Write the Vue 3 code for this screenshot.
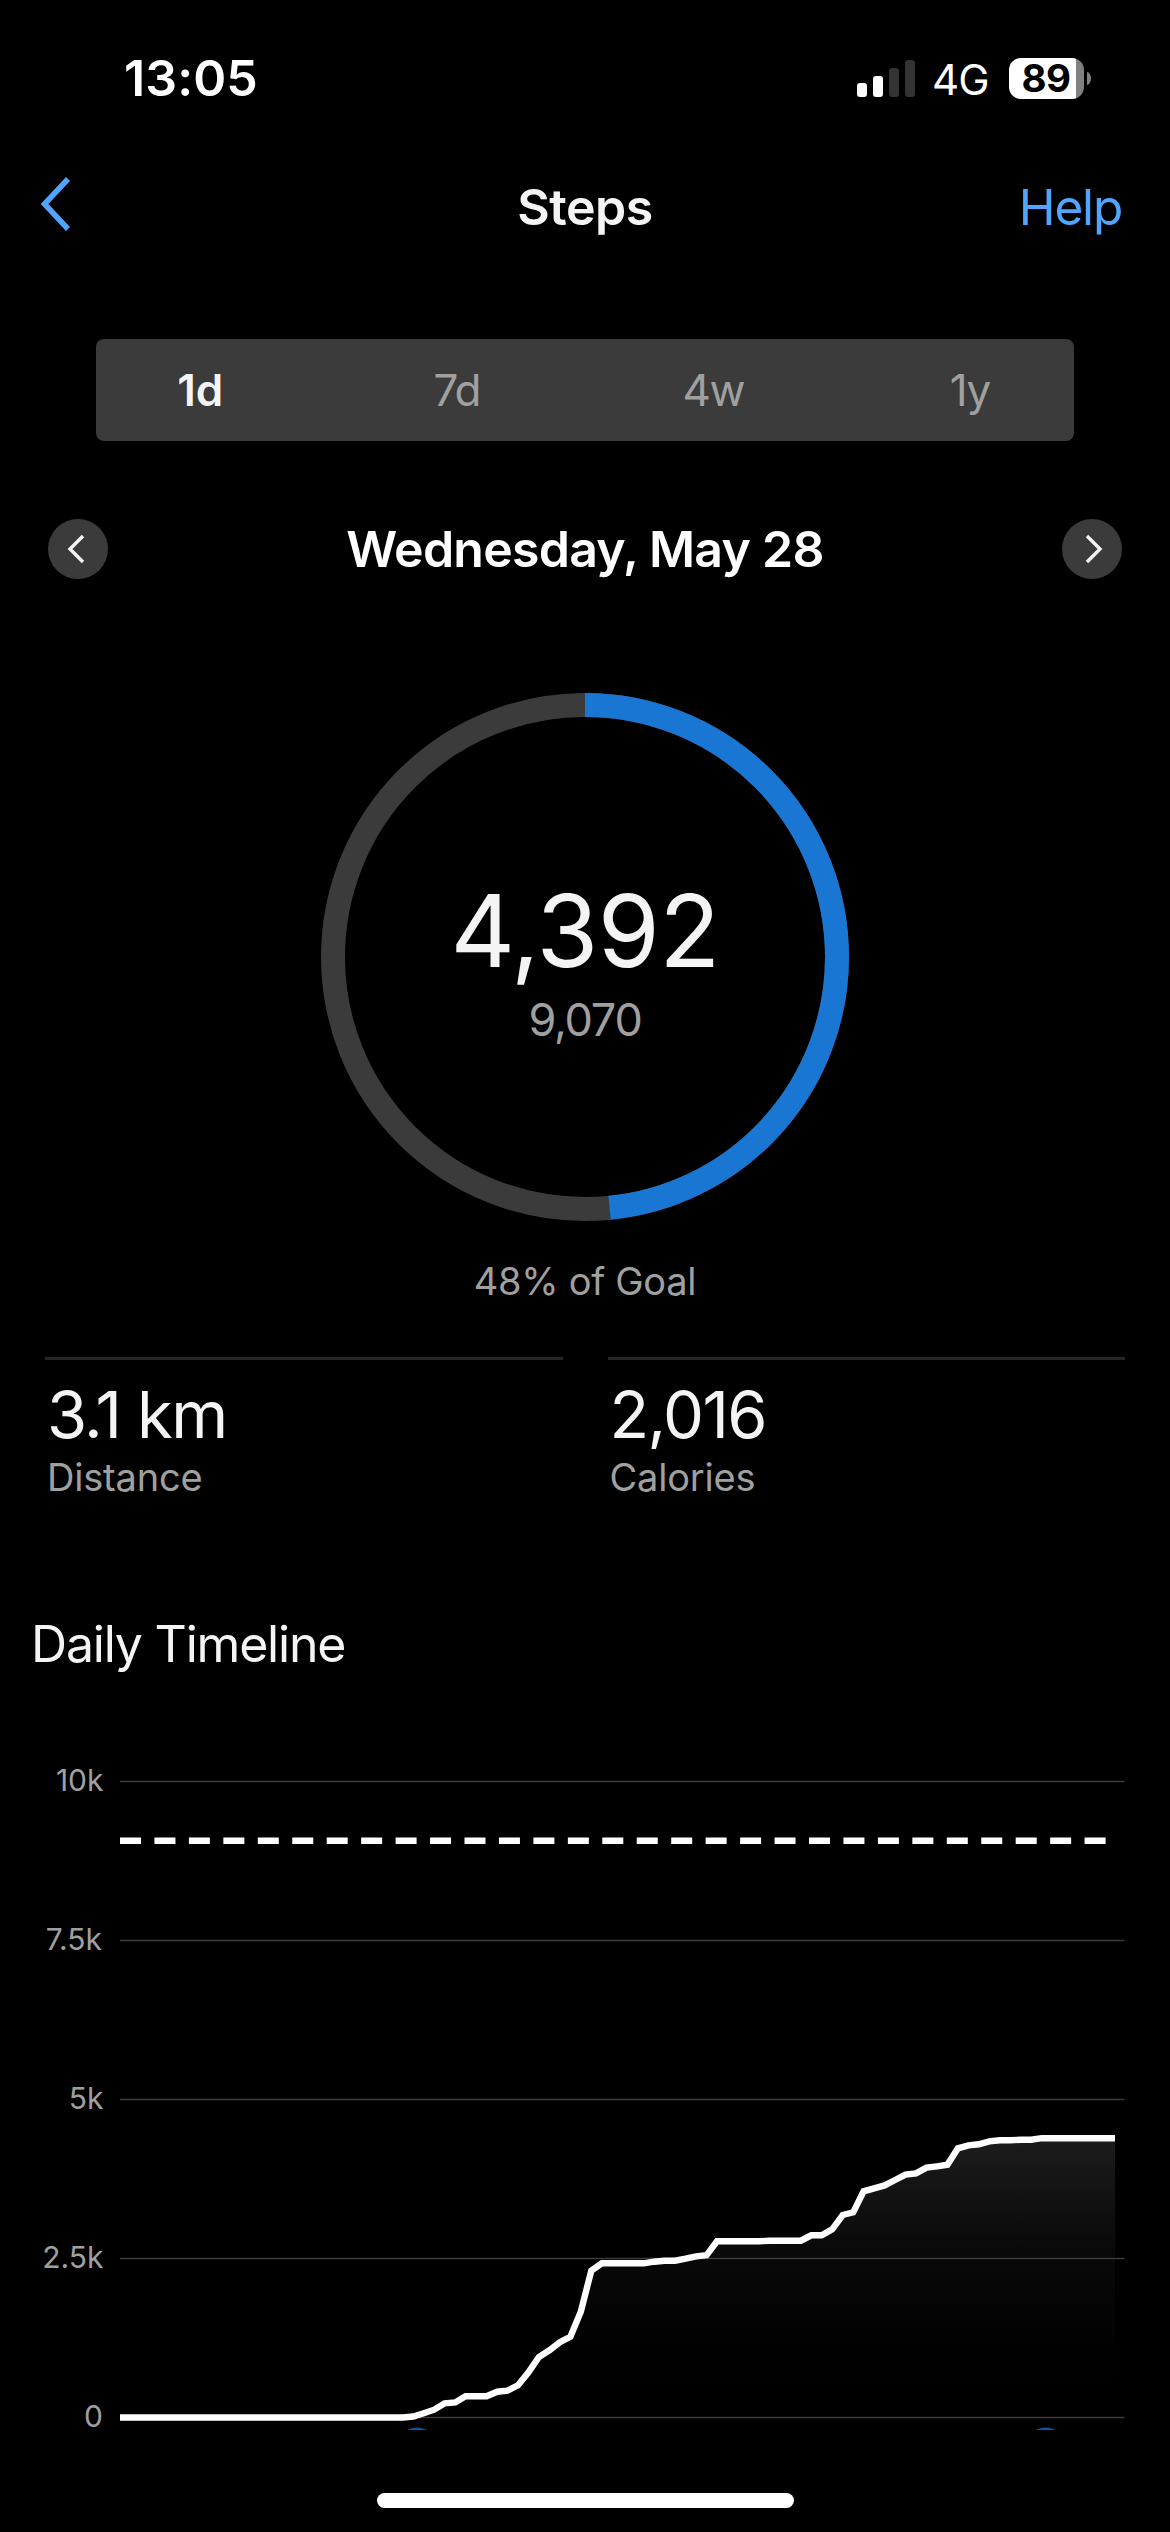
<template>
  <div class="screen">
    <header class="status">
      <span class="time">13:05</span>
      <div class="status-right">
        <div class="signal">
          <i class="on b1"></i><i class="on b2"></i><i class="b3"></i><i class="b4"></i>
        </div>
        <span class="network">4G</span>
        <div class="battery">
          <div class="battery-body"><span>89</span></div>
          <div class="battery-cap"></div>
        </div>
      </div>
    </header>

    <nav class="nav">
      <button class="back">
        <svg width="36" height="60" viewBox="0 0 36 60" fill="none" stroke="currentColor" stroke-width="5.5"><path d="M32 5 8.5 30 32 55"/></svg>
      </button>
      <h1>Steps</h1>
      <button class="help">Help</button>
    </nav>

    <div class="range">
      <div class="range-items">
        <button
          v-for="r in ranges"
          :key="r"
          :class="{ active: r === range }"
          @click="range = r"
        >{{ r }}</button>
      </div>
    </div>

    <div class="date-row">
      <button class="round">
        <svg width="60" height="60" viewBox="0 0 60 60" fill="none" stroke="currentColor" stroke-width="3.4"><path d="M35 17 22 30 35 43"/></svg>
      </button>
      <h2>Wednesday, May 28</h2>
      <button class="round">
        <svg width="60" height="60" viewBox="0 0 60 60" fill="none" stroke="currentColor" stroke-width="3.4"><path d="M25 17 38 30 25 43"/></svg>
      </button>
    </div>

    <div class="ring">
      <svg width="528" height="528" viewBox="0 0 528 528" fill="none" stroke-width="24">
        <circle cx="264" cy="264" r="252" stroke="#3b3b3b"/>
        <circle
          cx="264"
          cy="264"
          r="252"
          stroke="#1976d2"
          :stroke-dasharray="`${ringLength * steps / goal} ${ringLength}`"
          transform="rotate(-90 264 264)"
        />
      </svg>
      <div class="ring-text">
        <span class="steps">{{ steps.toLocaleString('en-US') }}</span>
        <span class="goal">{{ goal.toLocaleString('en-US') }}</span>
      </div>
    </div>
    <p class="percent">{{ Math.floor(steps / goal * 100) }}% of Goal</p>

    <div class="stats">
      <div class="stat">
        <strong>3.1 km</strong>
        <span>Distance</span>
      </div>
      <div class="stat">
        <strong>2,016</strong>
        <span>Calories</span>
      </div>
    </div>

    <h3 class="section">Daily Timeline</h3>
    <svg class="chart" width="1170" height="776" viewBox="0 0 1170 776">
      <defs>
        <linearGradient id="fill" x1="0" y1="0" x2="0" y2="1">
          <stop offset="0" stop-color="#fff" stop-opacity="0.11"/>
          <stop offset="0.4" stop-color="#fff" stop-opacity="0.036"/>
          <stop offset="0.75" stop-color="#fff" stop-opacity="0.005"/>
          <stop offset="1" stop-color="#fff" stop-opacity="0"/>
        </linearGradient>
        <clipPath id="fold"><rect width="1170" height="756"/></clipPath>
      </defs>
      <path :d="areaPath" fill="url(#fill)"/>
      <g v-for="t in ticks" :key="t.value">
        <line x1="120" x2="1124.5" :y1="y(t.value)" :y2="y(t.value)" stroke="#3b3b3b" stroke-width="1.5"/>
        <text :x="t.right" :y="y(t.value) + 9.5" text-anchor="end">{{ t.label }}</text>
      </g>
      <line x1="120" x2="1115" :y1="y(goal)" :y2="y(goal)" stroke="#fff" stroke-width="6.5" stroke-dasharray="21 13.45"/>
      <path :d="linePath" fill="none" stroke="#fff" stroke-width="6.4"/>
      <g clip-path="url(#fold)">
        <circle v-for="m in markers" :key="m" :cx="m" cy="775" r="21.5" fill="#0b55a6"/>
      </g>
    </svg>

    <div class="home-bar"></div>
  </div>
</template>

<script setup>
import { ref } from 'vue'

const ranges = ['1d', '7d', '4w', '1y']
const range = ref('1d')
const steps = 4392
const goal = 9070
const ringLength = 2 * Math.PI * 252

const ticks = [
  { value: 10000, label: '10k', right: 103.5 },
  { value: 7500, label: '7.5k', right: 102 },
  { value: 5000, label: '5k', right: 103.5 },
  { value: 2500, label: '2.5k', right: 103.5 },
  { value: 0, label: '0', right: 103 },
]
const markers = [417, 1045.7]

// cumulative steps, one value per 15 minutes
const totals = [
  ...Array(28).fill(0),
  15, 66, 123, 223, 238, 335, 335, 335, 406, 422, 506, 710, 951, 1056, 1182, 1271, 1664, 2309,
  2424, 2424, 2424, 2424, 2424, 2450, 2466, 2466, 2497, 2534, 2550,
  2770, 2770, 2770, 2770, 2770, 2780, 2780, 2780, 2780, 2864, 2864, 2959, 3184, 3226,
  3556, 3603, 3650, 3734, 3818, 3839, 3928, 3949, 3975,
  4232, 4279, 4295, 4342, 4358, 4358, 4368, 4368,
  ...Array(8).fill(4392),
]

const y = (v) => 743.5 - v * 0.0636
const x = (i) => 120 + (i * 995) / (totals.length - 1)
const linePath = 'M' + totals.map((v, i) => `${x(i).toFixed(1)} ${y(v).toFixed(1)}`).join('L')
const areaPath = `${linePath}V${y(0)}H120Z`
</script>

<style>
html, body { margin: 0; background: #000; }
</style>

<style scoped>
.screen {
  width: 1170px;
  height: 2532px;
  overflow: hidden;
  background: #000;
  color: #f4f4f4;
  font-family: Inter, "Liberation Sans", sans-serif;
  display: flex;
  flex-direction: column;
}
button {
  background: none;
  border: none;
  padding: 0;
  font: inherit;
  color: inherit;
  cursor: pointer;
}
h1, h2, h3, p { margin: 0; }
svg { display: block; flex-shrink: 0; }
.status {
  height: 156px;
  box-sizing: border-box;
  padding: 0 79px 0 124px;
  display: flex;
  align-items: center;
  justify-content: space-between;
  color: #fff;
}
.time { font-size: 50px; font-weight: 600; letter-spacing: 0.1px; }
.status-right { display: flex; align-items: center; }
.signal { display: flex; align-items: flex-end; gap: 6px; height: 37px; }
.signal i { width: 10px; border-radius: 3px; background: #333; }
.signal .on { background: #fff; }
.b1 { height: 14px; }
.b2 { height: 21px; }
.b3 { height: 29px; }
.b4 { height: 37px; }
.network { width: 59px; margin: 3px 18px 0 17px; font-size: 42px; letter-spacing: -1px; }
.battery { display: flex; align-items: center; gap: 3px; }
.battery-body {
  width: 75px;
  height: 41px;
  border-radius: 12px;
  background: linear-gradient(to right, #fff 67px, #808080 67px);
  color: #000;
  display: flex;
  align-items: center;
  justify-content: center;
  font-size: 38.5px;
  font-weight: 700;
  letter-spacing: -0.5px;
}
.battery-body span { margin-right: 1px; }
.battery-cap { width: 4px; height: 13px; border-radius: 0 4px 4px 0 / 0 6.5px 6.5px 0; background: #808080; }
.nav {
  height: 102px;
  padding: 0 48px 0 36px;
  display: grid;
  grid-template-columns: 1fr auto 1fr;
  align-items: center;
}
.back { color: #4fa5ff; justify-self: start; margin-top: -7px; }
.nav h1 { font-size: 50px; font-weight: 600; letter-spacing: -0.5px; margin-left: 12px; }
.help { color: #4fa5ff; font-size: 49.5px; justify-self: end; letter-spacing: -1.2px; }
.range {
  height: 102px;
  margin: 81px 96px 0;
  border-radius: 8px;
  background: #3b3b3b;
}
.range-items { height: 100%; margin: 0 -24px; display: grid; grid-template-columns: repeat(4, 1fr); }
.range-items button { font-size: 44px; color: #a0a0a0; letter-spacing: -1.5px; }
.range-items .active { color: #f4f4f4; font-weight: 600; letter-spacing: 0; }
.date-row {
  margin-top: 78px;
  padding: 0 48px;
  height: 60px;
  display: flex;
  align-items: center;
  justify-content: space-between;
}
.date-row h2 { font-size: 50px; font-weight: 600; color: #fff; letter-spacing: -0.75px; }
.round { width: 60px; height: 60px; border-radius: 50%; background: #3b3b3b; }
.ring { width: 528px; margin: 114px auto 0; display: grid; }
.ring > * { grid-area: 1 / 1; }
.ring-text { display: flex; flex-direction: column; align-items: center; padding-top: 178px; }
.steps { font-size: 100px; line-height: 120px; letter-spacing: -0.6px; }
.goal { font-size: 45px; line-height: 54px; margin-top: 2px; color: #a0a0a0; letter-spacing: -1.2px; }
.percent {
  margin-top: 38px;
  text-align: center;
  font-size: 38px;
  line-height: 45px;
  color: #a0a0a0;
  letter-spacing: -0.3px;
}
.stats {
  margin: 53px 45px 0;
  display: grid;
  grid-template-columns: 1fr 1fr;
  gap: 45px;
}
.stat {
  border-top: 3px solid #262626;
  padding: 22px 0 0 2px;
  display: flex;
  flex-direction: column;
}
.stat strong { font-size: 65px; line-height: 66px; font-weight: 400; letter-spacing: -1.6px; }
.stat span { margin-top: 7px; font-size: 38px; line-height: 44px; color: #a0a0a0; letter-spacing: -0.2px; }
.section {
  margin: 115px 30px 0 31px;
  font-size: 50px;
  line-height: 60px;
  font-weight: 400;
  letter-spacing: -1.2px;
}
.chart text { font-size: 30px; fill: #a0a0a0; }
.home-bar {
  width: 417px;
  height: 15px;
  margin: 43px auto 0;
  border-radius: 8px;
  background: #fff;
}
</style>
